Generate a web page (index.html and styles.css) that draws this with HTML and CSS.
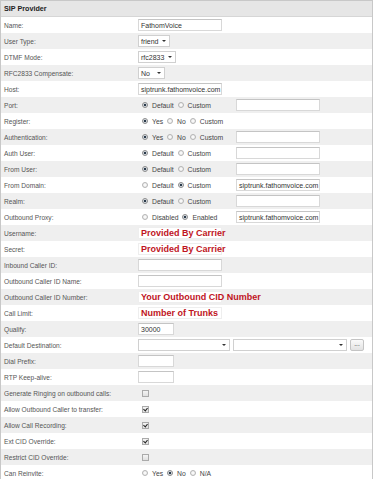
FILE: index.html
```html
<!DOCTYPE html>
<html>

<head>
    <title>SIP Provider</title>
    <link rel="stylesheet" href="styles.css">
</head>

<body>
    <div class="panel">
        <div class="head">SIP Provider</div>

        <div class="row"><label>Name:</label><div class="ctl"><span class="box w84">FathomVoice</span></div></div>
        <div class="row"><label>User Type:</label><div class="ctl"><span class="sel w32">friend<i class="arrow"></i></span></div></div>
        <div class="row"><label>DTMF Mode:</label><div class="ctl"><span class="sel w38">rfc2833<i class="arrow"></i></span></div></div>
        <div class="row"><label>RFC2833 Compensate:</label><div class="ctl"><span class="sel w27">No<i class="arrow"></i></span></div></div>
        <div class="row"><label>Host:</label><div class="ctl"><span class="box w84">siptrunk.fathomvoice.com</span></div></div>
        <div class="row"><label>Port:</label><div class="ctl">
            <div class="opts"><span class="radio on"></span>Default<span class="radio"></span>Custom</div>
            <span class="box w84"></span></div></div>
        <div class="row"><label>Register:</label><div class="ctl">
            <div class="opts"><span class="radio on"></span>Yes<span class="radio"></span>No<span class="radio"></span>Custom</div></div></div>
        <div class="row"><label>Authentication:</label><div class="ctl">
            <div class="opts"><span class="radio on"></span>Yes<span class="radio"></span>No<span class="radio"></span>Custom</div>
            <span class="box w84"></span></div></div>
        <div class="row"><label>Auth User:</label><div class="ctl">
            <div class="opts"><span class="radio on"></span>Default<span class="radio"></span>Custom</div>
            <span class="box w84"></span></div></div>
        <div class="row"><label>From User:</label><div class="ctl">
            <div class="opts"><span class="radio on"></span>Default<span class="radio"></span>Custom</div>
            <span class="box w84"></span></div></div>
        <div class="row"><label>From Domain:</label><div class="ctl">
            <div class="opts"><span class="radio"></span>Default<span class="radio on"></span>Custom</div>
            <span class="box w84">siptrunk.fathomvoice.com</span></div></div>
        <div class="row"><label>Realm:</label><div class="ctl">
            <div class="opts"><span class="radio on"></span>Default<span class="radio"></span>Custom</div>
            <span class="box w84"></span></div></div>
        <div class="row"><label>Outbound Proxy:</label><div class="ctl">
            <div class="opts"><span class="radio"></span>Disabled<span class="radio on"></span>Enabled</div>
            <span class="box w84">siptrunk.fathomvoice.com</span></div></div>
        <div class="row"><label>Username:</label><div class="ctl"><span class="box w84 note">Provided By Carrier</span></div></div>
        <div class="row"><label>Secret:</label><div class="ctl"><span class="box w84 note">Provided By Carrier</span></div></div>
        <div class="row"><label>Inbound Caller ID:</label><div class="ctl"><span class="box w84"></span></div></div>
        <div class="row"><label>Outbound Caller ID Name:</label><div class="ctl"><span class="box w84"></span></div></div>
        <div class="row"><label>Outbound Caller ID Number:</label><div class="ctl"><span class="box w84 note">Your Outbound CID Number</span></div></div>
        <div class="row"><label>Call Limit:</label><div class="ctl"><span class="box w84 note">Number of Trunks</span></div></div>
        <div class="row"><label>Qualify:</label><div class="ctl"><span class="box w36">30000</span></div></div>
        <div class="row"><label>Default Destination:</label><div class="ctl">
            <span class="sel w92"><i class="arrow"></i></span>
            <span class="sel w114"><i class="arrow"></i></span>
            <span class="btn">...</span></div></div>
        <div class="row"><label>Dial Prefix:</label><div class="ctl"><span class="box w36"></span></div></div>
        <div class="row"><label>RTP Keep-alive:</label><div class="ctl"><span class="box w36"></span></div></div>
        <div class="row"><label>Generate Ringing on outbound calls:</label><div class="ctl"><span class="check"></span></div></div>
        <div class="row"><label>Allow Outbound Caller to transfer:</label><div class="ctl"><span class="check on"></span></div></div>
        <div class="row"><label>Allow Call Recording:</label><div class="ctl"><span class="check on"></span></div></div>
        <div class="row"><label>Ext CID Override:</label><div class="ctl"><span class="check on"></span></div></div>
        <div class="row"><label>Restrict CID Override:</label><div class="ctl"><span class="check"></span></div></div>
        <div class="row"><label>Can Reinvite:</label><div class="ctl">
            <div class="opts"><span class="radio"></span>Yes<span class="radio on"></span>No<span class="radio"></span>N/A</div></div></div>
    </div>
</body>

</html>
```

FILE: styles.css
```css
body {
    margin: 0;
    font-family: "Liberation Sans", Arial, sans-serif;
    font-size: 6.6px;
    color: #555;
    background: #fff;
}

.panel {
    border: 1px solid #c8c8c8;
    border-bottom: none;
    width: 371px;
}

.head {
    height: 15px;
    line-height: 15px;
    padding-left: 3px;
    background: #e6e6e6;
    border-bottom: 1px solid #d6d6d6;
    font-weight: bold;
    font-size: 7.2px;
    color: #222;
}

.row {
    display: grid;
    grid-template-columns: 134px 1fr;
    align-items: center;
    height: 16px;
    padding-left: 3px;
}

.row:nth-of-type(odd) {
    background: #efefef;
}

.row:nth-of-type(even) {
    background: #fff;
}

label {
    white-space: nowrap;
}

.ctl {
    display: flex;
    align-items: center;
}

.opts {
    display: flex;
    align-items: center;
    width: 98px;
    color: #444;
    font-size: 6.8px;
}

.box {
    display: inline-block;
    box-sizing: border-box;
    height: 12px;
    line-height: 11px;
    padding-left: 2px;
    border: 1px solid #d8d8d8;
    border-top-color: #c4c4c4;
    background: #fff;
    color: #333;
    font-size: 7px;
    white-space: nowrap;
}

.w84 { width: 84px; }
.w36 { width: 36px; }
.w32 { width: 32px; }
.w38 { width: 38px; }
.w27 { width: 27px; }
.w92 { width: 92px; }
.w114 { width: 114px; }

.note {
    border-color: #eee;
    color: #c0141e;
    font-weight: bold;
    font-size: 9px;
    overflow: visible;
}

.sel {
    position: relative;
    display: inline-block;
    box-sizing: border-box;
    height: 12px;
    line-height: 11px;
    padding-left: 2px;
    border: 1px solid #d0d0d0;
    background: #fff;
    color: #333;
    font-size: 7px;
    margin-right: 3px;
}

.arrow {
    position: absolute;
    right: 3px;
    top: 4px;
    border-left: 2px solid transparent;
    border-right: 2px solid transparent;
    border-top: 2px solid #333;
}

.btn {
    display: inline-block;
    box-sizing: border-box;
    width: 14px;
    height: 12px;
    line-height: 8px;
    text-align: center;
    border: 1px solid #c4c4c4;
    border-radius: 2px;
    background: linear-gradient(#fafafa, #e2e2e2);
    color: #333;
}

.radio {
    box-sizing: border-box;
    width: 6px;
    height: 6px;
    margin: 0 4px 0 4px;
    border: 1px solid #b4b4b4;
    border-radius: 50%;
    background: radial-gradient(#fff, #e4e4e4);
}

.radio.on {
    border-color: #8a8a8a;
    background: radial-gradient(#2a3a4a 0 1.3px, #dfe4ea 1.6px);
}

.check {
    box-sizing: border-box;
    width: 7px;
    height: 7px;
    margin-left: 4px;
    border: 1px solid #aaa;
    background: linear-gradient(#f4f4f4, #e0e0e0);
    position: relative;
}

.check.on::after {
    content: "";
    position: absolute;
    left: 1px;
    top: 0;
    width: 2px;
    height: 3px;
    border-right: 1px solid #222;
    border-bottom: 1px solid #222;
    transform: rotate(40deg);
}
```
